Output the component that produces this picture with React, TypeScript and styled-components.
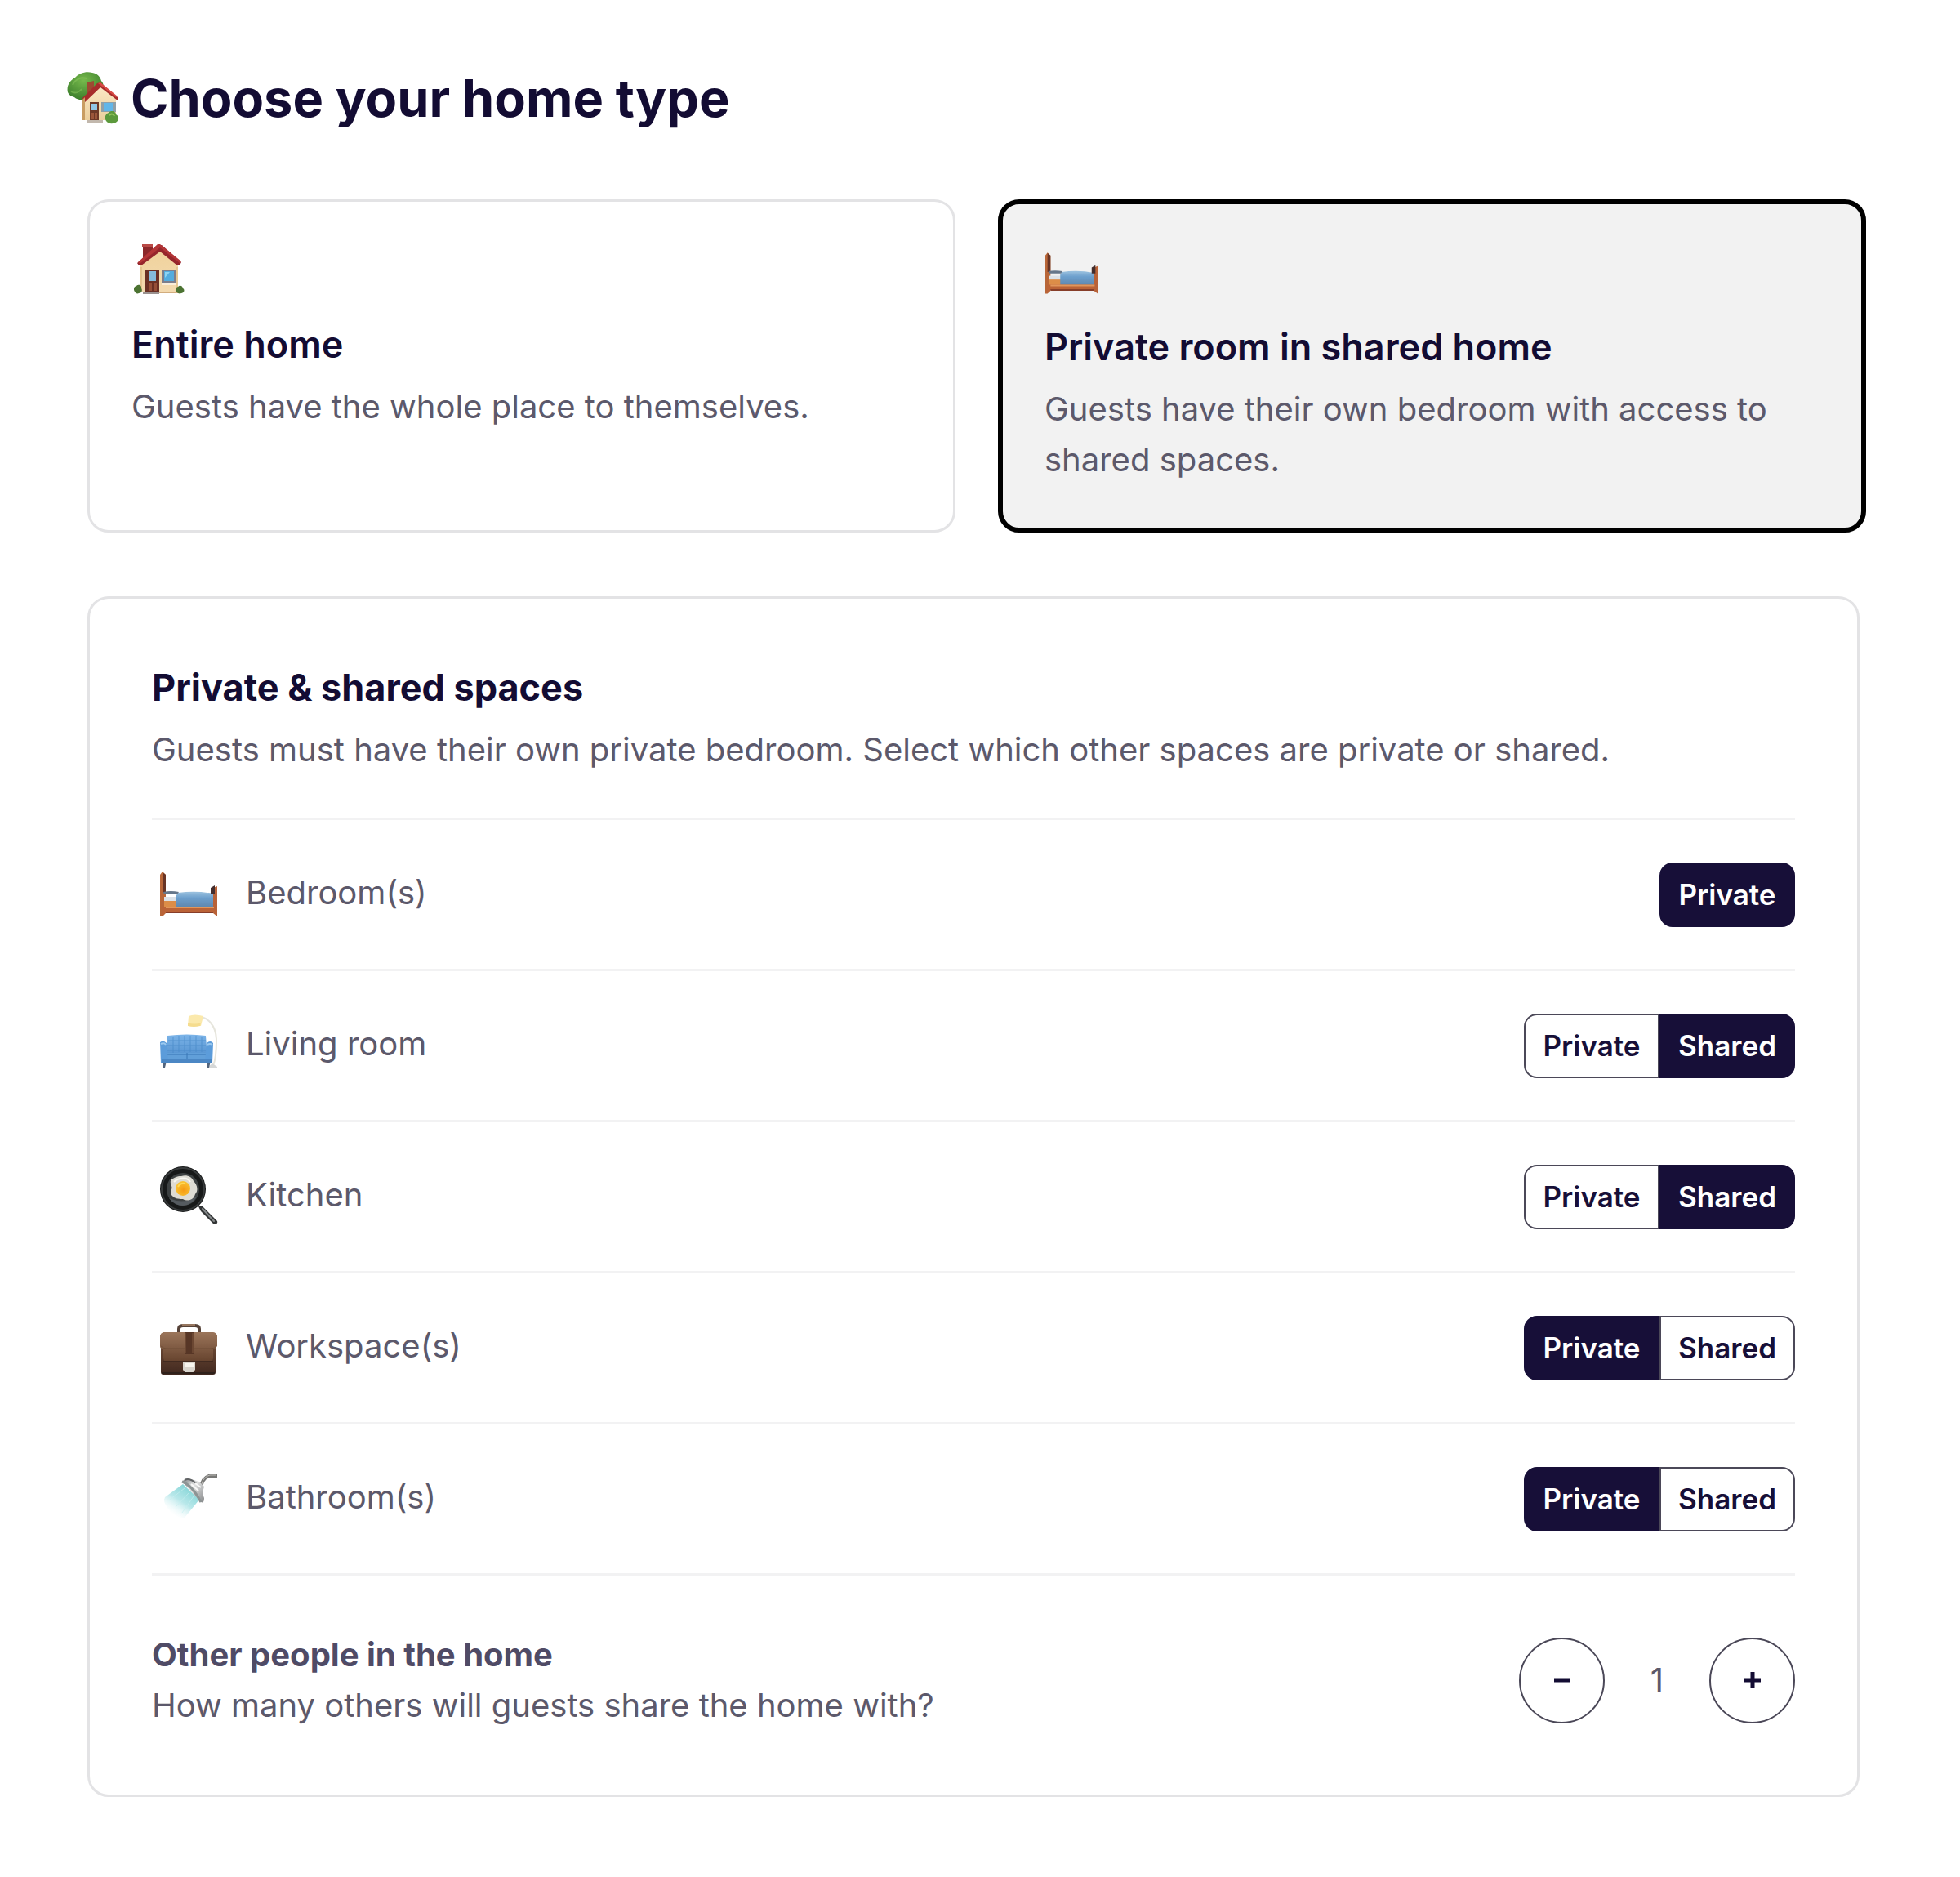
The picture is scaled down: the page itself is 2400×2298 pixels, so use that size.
import React, { useState } from "react";
import styled, { createGlobalStyle } from "styled-components";

type Access = "private" | "shared";
type HomeType = "entire" | "room";

interface Space {
  id: string;
  label: string;
  icon: React.ReactNode;
  options: Access[];
}

const colors = {
  ink: "#170f38",
  title: "#130c33",
  muted: "#5c596b",
  strong: "#4f4b66",
  border: "#e3e3e5",
  divider: "#f2f2f3",
  outline: "#4b4858",
  selected: "#f2f2f2",
};

const GlobalStyle = createGlobalStyle`
  * {
    box-sizing: border-box;
  }

  body {
    margin: 0;
    background: #fff;
    color: ${colors.muted};
    font-family: Inter, "Liberation Sans", sans-serif;
    font-size: 40px;
    line-height: 62px;
  }

  button {
    font: inherit;
    cursor: pointer;
  }
`;

const Page = styled.main`
  padding: 80px 115px 96px 107px;
`;

const Heading = styled.h1`
  display: flex;
  align-items: center;
  gap: 14px;
  margin: 0 0 84px -25px;
  color: ${colors.title};
  font-size: 63px;
  font-weight: 700;
  line-height: 80px;
`;

const HomeTypes = styled.div`
  display: grid;
  grid-template-columns: 1fr 1fr;
  gap: 52px;
`;

const HomeCard = styled.button<{ $selected: boolean }>`
  display: flex;
  flex-direction: column;
  align-items: flex-start;
  justify-content: flex-start;
  padding: 50px 51px 52px;
  border: ${({ $selected }) =>
    $selected ? "6px solid #000" : `3px solid ${colors.border}`};
  border-radius: 26px;
  background: ${({ $selected }) => ($selected ? colors.selected : "#fff")};
  color: ${colors.muted};
  text-align: left;
`;

const CardTitle = styled.span`
  margin: 26px 0 12px;
  color: ${colors.title};
  font-size: 45px;
  font-weight: 600;
  line-height: 66px;
`;

const Panel = styled.section`
  margin: 78px 8px 0 0;
  padding: 76px 76px 78px;
  border: 3px solid ${colors.border};
  border-radius: 26px;
`;

const PanelTitle = styled.h2`
  margin: 0 0 12px;
  color: ${colors.title};
  font-size: 45px;
  font-weight: 700;
  line-height: 66px;
`;

const Description = styled.p`
  margin: 0;
`;

const SpaceList = styled.ul`
  margin: 52px 0 0;
  padding: 0;
  border-top: 3px solid ${colors.divider};
  list-style: none;
`;

const SpaceRow = styled.li`
  display: flex;
  align-items: center;
  height: 185px;
  padding-left: 9px;
  border-bottom: 3px solid ${colors.divider};
`;

const SpaceIcon = styled.span`
  display: flex;
  width: 72px;
  height: 76px;
  margin-right: 34px;
`;

const SpaceLabel = styled.span`
  flex: 1;
  padding-bottom: 4px;
`;

const Toggle = styled.div`
  display: flex;
`;

const ToggleButton = styled.button<{ $active: boolean }>`
  width: 166px;
  height: 79px;
  padding: 0;
  border: 2px solid
    ${({ $active }) => ($active ? colors.ink : colors.outline)};
  background: ${({ $active }) => ($active ? colors.ink : "#fff")};
  color: ${({ $active }) => ($active ? "#fff" : colors.ink)};
  font-size: 35px;
  font-weight: 600;
  line-height: 44px;

  &:first-child {
    border-top-left-radius: 16px;
    border-bottom-left-radius: 16px;
  }

  &:last-child {
    border-top-right-radius: 16px;
    border-bottom-right-radius: 16px;
  }
`;

const PeopleRow = styled.div`
  display: flex;
  align-items: center;
  justify-content: space-between;
  margin-top: 66px;
`;

const PeopleTitle = styled.h3`
  margin: 0;
  color: ${colors.strong};
  font-size: 40px;
  font-weight: 700;
  line-height: 62px;
`;

const Stepper = styled.div`
  display: flex;
  align-items: center;
`;

const StepButton = styled.button`
  display: flex;
  align-items: center;
  justify-content: center;
  width: 105px;
  height: 105px;
  padding: 0;
  border: 2px solid ${colors.outline};
  border-radius: 50%;
  background: #fff;
  color: ${colors.title};
`;

const Count = styled.output`
  width: 128px;
  text-align: center;
`;

function HouseGardenIcon() {
  return (
    <svg aria-hidden="true" width="64" height="64" viewBox="0 0 64 64">
      <defs>
        <radialGradient id="tree" cx="45%" cy="30%" r="70%">
          <stop offset="0" stopColor="#76b94c" />
          <stop offset="1" stopColor="#3a7d2b" />
        </radialGradient>
        <linearGradient id="gardenWall" x2="0" y2="1">
          <stop offset="0" stopColor="#fbe9c6" />
          <stop offset="1" stopColor="#eccf9d" />
        </linearGradient>
      </defs>
      <path
        d="M1 25C-1 17 4 10 10 7 15 1 24-1 31 1c6 1 10 5 11 10 4 4 3 10 0 13L24 34c-6 1-12 0-15-3-4-1-7-3-8-6z"
        fill="url(#tree)"
      />
      <path d="M7 16c3-7 10-10 17-8M5 24c5 3 10 1 13-3" stroke="#8bc75e" strokeWidth="2" fill="none" opacity=".5" />
      <path d="M25 13l8-2v9l-8 6z" fill="#9c4a32" />
      <path d="M21 32l20-16 19 16v27H21z" fill="url(#gardenWall)" />
      <path d="M19 32L37 14l4-1 21 18v4L41 19 21 38z" fill="#a72c2b" />
      <path d="M38 14l3-1 21 17-2 1z" fill="#d84b45" />
      <path d="M19 34l3-3v28h-3z" fill="#c99d62" />
      <path d="M28 37h11v23H28z" fill="#6e3a27" />
      <path d="M30 39h7v8h-7z" fill="#91c7e6" />
      <path d="M30 50h3v8h-3zM34 50h3v8h-3z" fill="#9c573a" />
      <path d="M42 37h18v12H42z" fill="#90a0a8" />
      <path d="M45 38h11v10H45z" fill="#62b6e8" />
      <path d="M24 59h20v3H24z" fill="#c2b8ad" />
      <path d="M48 60c-3-5 0-9 3-10 4-4 9-1 9 2 4 2 4 7 1 9-4 3-10 3-13-1z" fill="#5c993c" />
      <path d="M52 53c2-2 5-2 6 1" stroke="#97c75d" strokeWidth="2" fill="none" />
    </svg>
  );
}

function HouseIcon() {
  return (
    <svg aria-hidden="true" width="66" height="66" viewBox="-2 0 66 66">
      <defs>
        <linearGradient id="houseWall" x2="0" y2="1">
          <stop offset="0" stopColor="#f0d29b" />
          <stop offset="1" stopColor="#f3dab0" />
        </linearGradient>
      </defs>
      <path d="M12 3h12v15l-12 8z" fill="#8c282b" />
      <path d="M11 2h13v4H11z" fill="#b94a46" />
      <path d="M9 27L33 8l22 19v34H9z" fill="url(#houseWall)" />
      <path d="M5 25L31 3h4l24 21-2 4h-3L33 11 10 28H7z" fill="#96262c" />
      <path d="M33 2l26 21-2 2L33 6 8 26l-2-2L30 2z" fill="#b33537" />
      <path d="M9 30h2v29H9zM53 30h2v29h-2z" fill="#dfbd86" opacity=".65" />
      <path d="M15 33h17v28H15z" fill="#6a3024" />
      <path d="M19 35h9v12h-9z" fill="#85bbd9" />
      <path d="M19 50h4v9h-4zM25 50h4v9h-4z" fill="#964e36" />
      <path d="M35 33h18v17H35z" fill="#7e7e8b" />
      <path d="M38 35h12v12H38z" fill="#53acdf" />
      <path d="M39 36h6l-6 7z" fill="#8ed3f1" />
      <path d="M35 49h18v3H35z" fill="#f9edda" />
      <path d="M12 60h20v3H12z" fill="#9b9290" />
      <path d="M32 60h23v2H32z" fill="#d2ad7e" />
      <path d="M2 60c-2-3-1-6 2-7 3-3 7 0 6 3 2 3 0 6-3 6-2 1-4 0-5-2zM53 60c-1-3 0-6 2-6 3-3 6 0 6 2 3 2 1 6-2 6-2 1-5 0-6-2z" fill="#4c7332" />
    </svg>
  );
}

function BedIcon({ size, id }: { size: number; id: string }) {
  return (
    <svg aria-hidden="true" width={size} height={size} viewBox="0 0 72 72">
      <defs>
        <linearGradient id={id} x2="0" y2="1">
          <stop offset="0" stopColor="#9cc2df" />
          <stop offset=".4" stopColor="#6c9fcd" />
          <stop offset="1" stopColor="#5f86ad" />
        </linearGradient>
      </defs>
      <path d="M1 14l3-4 4 4v47l-4 4H1z" fill="#b86638" />
      <path d="M4 11l4 3v22H4z" fill="#683425" />
      <path d="M66 30l5-2v37l-5-4z" fill="#b86238" />
      <path d="M6 41h17v8H6z" fill="#dce2e8" />
      <path d="M6 46h17v8H6z" fill="#dc8d48" />
      <path d="M23 36q22-3 43 1v17H21V39z" fill={`url(#${id})`} />
      <path d="M5 35q9-2 19 0l-2 3H6z" fill="#66778a" />
      <path d="M63 30l5-3v11h-5z" fill="#432d2d" />
      <path d="M5 53h62v7H8l-5 5V54z" fill="#bb6337" />
      <path d="M8 53h59v2H8z" fill="#e1965b" />
      <path d="M8 59h58v2H8z" fill="#873e29" />
    </svg>
  );
}

function CouchIcon() {
  return (
    <svg aria-hidden="true" width="72" height="72" viewBox="0 0 72 72">
      <defs>
        <linearGradient id="couch" x2="0" y2="1">
          <stop offset="0" stopColor="#7cb4e8" />
          <stop offset="1" stopColor="#518fce" />
        </linearGradient>
      </defs>
      <path d="M45 3c14-2 25 11 25 29 0 13-1 23-4 31" stroke="#e6e5dc" strokeWidth="2" fill="none" />
      <path d="M36 2q7-3 18 0l-3 12H35z" fill="#fbe9ac" />
      <path d="M35 10q8 3 16 0l-1 4q-8 2-15 0z" fill="#f5dc8e" />
      <path d="M60 64l5-4 6 4v2H60z" fill="#d5d7d7" />
      <path d="M4 57h5l-2 8H4zM59 57h4l-2 8h-3z" fill="#53657d" />
      <path d="M10 26q24-3 47 0l2 27H8z" fill="url(#couch)" />
      <path
        d="M17 27v20M24 26v20M31 26v20M38 26v20M45 26v20M52 27v19M11 32h46M10 38h47M10 44h47"
        stroke="#4385c5"
        strokeWidth="1"
        opacity=".6"
      />
      <path d="M8 47h52v8H8z" fill="#619fd9" />
      <path d="M9 49h50M34 47v8" stroke="#3977b6" strokeWidth="1" />
      <path d="M1 34q4-3 8 1l2 24H2zM58 35q5-4 8 0l-1 24h-9z" fill="#5c9cda" />
      <path d="M2 36q4-2 6 1M59 37q3-2 6 0" stroke="#9bc9ef" strokeWidth="2" fill="none" />
      <path d="M3 55h61v4H3z" fill="#4b87c4" />
    </svg>
  );
}

function PanIcon() {
  return (
    <svg aria-hidden="true" width="72" height="72" viewBox="0 0 72 72">
      <defs>
        <radialGradient id="yolk" cx="55%" cy="60%" r="60%">
          <stop offset="0" stopColor="#f69a13" />
          <stop offset="1" stopColor="#f9c534" />
        </radialGradient>
      </defs>
      <path d="M48 50l4-1 19 19q1 4-4 4L51 56z" fill="#333536" />
      <path d="M53 53l14 15" stroke="#85898a" strokeWidth="2" strokeLinecap="round" />
      <circle cx="29" cy="29" r="28" fill="#171919" />
      <circle cx="29" cy="29" r="26" fill="none" stroke="#383b3c" strokeWidth="2" />
      <circle cx="29" cy="29" r="20" fill="#3d4142" />
      <path d="M12 40q18 8 34-2-7 11-17 11T12 40z" fill="#555b60" />
      <path
        d="M15 17c4-2 6-4 12-4 7-2 13 1 15 6 5 5 6 12 2 16-2 8-10 9-15 6-6 0-11-1-13-4-5-3 1-8-1-12-1-3-2-6 0-8z"
        fill="#dedcd4"
      />
      <path d="M18 20c5-5 16-7 20 0" stroke="#f8f7f1" strokeWidth="2" fill="none" />
      <circle cx="29" cy="28" r="9" fill="url(#yolk)" />
      <path d="M23 26q3-5 8-4" stroke="#ffd957" strokeWidth="2" fill="none" />
    </svg>
  );
}

function BriefcaseIcon() {
  return (
    <svg aria-hidden="true" width="72" height="72" viewBox="0 0 72 72">
      <defs>
        <linearGradient id="leather" x2="0" y2="1">
          <stop offset="0" stopColor="#9b755a" />
          <stop offset="1" stopColor="#66432e" />
        </linearGradient>
        <linearGradient id="caseBody" x2="0" y2="1">
          <stop offset="0" stopColor="#765039" />
          <stop offset="1" stopColor="#40281f" />
        </linearGradient>
      </defs>
      <path d="M24 20v-5q0-4 5-4h15q5 0 5 4v5" stroke="#564238" strokeWidth="4" fill="none" />
      <path d="M28 10h16" stroke="#96765f" strokeWidth="2" />
      <path d="M2 27h68l-1 41q0 3-3 3H5q-3 0-3-3z" fill="url(#caseBody)" />
      <path d="M5 19h61q3 0 5 4v13q-2 3-5 4v10q0 5-5 5H10q-5 0-5-5V40q-4-1-4-4V23q1-3 4-4z" fill="url(#leather)" />
      <path d="M2 36q3 3 7 3h54q5 0 7-3" stroke="#684832" strokeWidth="1" fill="none" opacity=".7" />
      <path d="M31 19h11v27H31z" fill="#573626" />
      <path d="M32 20v25M41 20v25" stroke="#80583e" strokeWidth="1" />
      <path d="M5 55h61" stroke="#412a20" strokeWidth="2" />
      <path d="M29 56h15v9l-4 5h-7l-4-5z" fill="#d9d5cd" />
      <path d="M31 57h11v4H31z" fill="#f7f5ee" />
      <path d="M36 60h1v6h-1z" fill="#aaa298" />
      <path d="M3 69h65" stroke="#2f211b" strokeWidth="2" />
    </svg>
  );
}

function ShowerIcon() {
  return (
    <svg aria-hidden="true" width="72" height="72" viewBox="0 0 72 72">
      <defs>
        <linearGradient id="spray" x1=".75" y1=".1" x2=".2" y2=".9">
          <stop offset="0" stopColor="#84d5d7" />
          <stop offset=".5" stopColor="#b9e8ea" />
          <stop offset="1" stopColor="#f1fbfc" stopOpacity="0" />
        </linearGradient>
        <linearGradient id="chrome" x1="0" x2="1" y2="1">
          <stop offset="0" stopColor="#777b7d" />
          <stop offset=".4" stopColor="#e2e3e3" />
          <stop offset="1" stopColor="#858789" />
        </linearGradient>
      </defs>
      <path d="M29 20L7 36q-3 5 3 13 6 10 17 12h4l18-22z" fill="url(#spray)" />
      <path d="M31 25L13 39M37 30L20 48M42 35L28 55" stroke="#c9f0f1" strokeWidth="1" opacity=".7" />
      <path d="M51 25q1-12 10-15h10" stroke="#777775" strokeWidth="4" fill="none" />
      <path d="M52 20q2-9 10-11h8" stroke="#bdbcb8" strokeWidth="1" fill="none" />
      <path d="M28 17q4-5 11-3l10 3 6 6q-3 8 0 14 0 7-4 5z" fill="url(#chrome)" />
      <path d="M28 17q12 4 23 25" stroke="#8d9494" strokeWidth="3" fill="none" />
      <path d="M31 15q6-3 14 4" stroke="#606365" strokeWidth="2" fill="none" />
      <path d="M39 20l9 8M44 19l7 5" stroke="#f8f8f7" strokeWidth="2" />
    </svg>
  );
}

function StepIcon({ plus }: { plus?: boolean }) {
  return (
    <svg aria-hidden="true" width="20" height="20" viewBox="0 0 20 20">
      <path
        d={plus ? "M0 10h20M10 0v20" : "M0 10h20"}
        stroke="currentColor"
        strokeWidth="5"
      />
    </svg>
  );
}

const spaces: Space[] = [
  {
    id: "bedroom",
    label: "Bedroom(s)",
    icon: <BedIcon id="bedRow" size={72} />,
    options: ["private"],
  },
  {
    id: "living",
    label: "Living room",
    icon: <CouchIcon />,
    options: ["private", "shared"],
  },
  {
    id: "kitchen",
    label: "Kitchen",
    icon: <PanIcon />,
    options: ["private", "shared"],
  },
  {
    id: "workspace",
    label: "Workspace(s)",
    icon: <BriefcaseIcon />,
    options: ["private", "shared"],
  },
  {
    id: "bathroom",
    label: "Bathroom(s)",
    icon: <ShowerIcon />,
    options: ["private", "shared"],
  },
];

const optionLabels: Record<Access, string> = {
  private: "Private",
  shared: "Shared",
};

function App() {
  const [homeType, setHomeType] = useState<HomeType>("room");
  const [people, setPeople] = useState(1);
  const [access, setAccess] = useState<Record<string, Access>>({
    bedroom: "private",
    living: "shared",
    kitchen: "shared",
    workspace: "private",
    bathroom: "private",
  });

  return (
    <>
      <GlobalStyle />
      <Page>
        <Heading>
          <HouseGardenIcon />
          Choose your home type
        </Heading>

        <HomeTypes>
          <HomeCard
            $selected={homeType === "entire"}
            aria-pressed={homeType === "entire"}
            onClick={() => setHomeType("entire")}
            type="button"
          >
            <HouseIcon />
            <CardTitle>Entire home</CardTitle>
            <span>Guests have the whole place to themselves.</span>
          </HomeCard>
          <HomeCard
            $selected={homeType === "room"}
            aria-pressed={homeType === "room"}
            onClick={() => setHomeType("room")}
            type="button"
          >
            <BedIcon id="bedCard" size={66} />
            <CardTitle>Private room in shared home</CardTitle>
            <span>
              Guests have their own bedroom with access to shared spaces.
            </span>
          </HomeCard>
        </HomeTypes>

        <Panel>
          <PanelTitle>Private &amp; shared spaces</PanelTitle>
          <Description>
            Guests must have their own private bedroom. Select which other
            spaces are private or shared.
          </Description>

          <SpaceList>
            {spaces.map((space) => (
              <SpaceRow key={space.id}>
                <SpaceIcon>{space.icon}</SpaceIcon>
                <SpaceLabel id={`${space.id}-label`}>{space.label}</SpaceLabel>
                <Toggle aria-labelledby={`${space.id}-label`} role="group">
                  {space.options.map((option) => (
                    <ToggleButton
                      $active={access[space.id] === option}
                      aria-pressed={access[space.id] === option}
                      key={option}
                      onClick={() =>
                        setAccess({ ...access, [space.id]: option })
                      }
                      type="button"
                    >
                      {optionLabels[option]}
                    </ToggleButton>
                  ))}
                </Toggle>
              </SpaceRow>
            ))}
          </SpaceList>

          <PeopleRow>
            <div>
              <PeopleTitle>Other people in the home</PeopleTitle>
              <Description>
                How many others will guests share the home with?
              </Description>
            </div>
            <Stepper>
              <StepButton
                aria-label="Remove one person"
                onClick={() => setPeople(Math.max(0, people - 1))}
                type="button"
              >
                <StepIcon />
              </StepButton>
              <Count>{people}</Count>
              <StepButton
                aria-label="Add one person"
                onClick={() => setPeople(people + 1)}
                type="button"
              >
                <StepIcon plus />
              </StepButton>
            </Stepper>
          </PeopleRow>
        </Panel>
      </Page>
    </>
  );
}

export default App;
